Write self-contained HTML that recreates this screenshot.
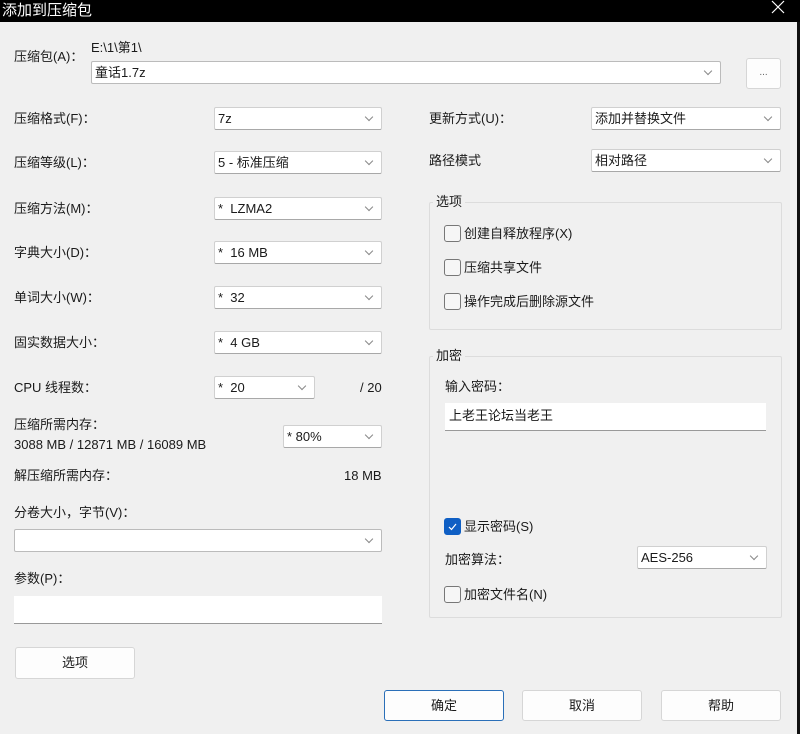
<!DOCTYPE html>
<html><head><meta charset="utf-8"><style>
*{box-sizing:border-box;margin:0;padding:0}
body{width:800px;height:734px;background:#f0f0f0;position:relative;overflow:hidden;font-family:"Liberation Sans","Noto Sans CJK SC",sans-serif;font-size:13px;color:#1a1a1a}
.a{position:absolute;white-space:nowrap;line-height:16px}
.c{position:absolute;background:#fff;border:1px solid #d0d0d0;border-bottom-color:#a8a8a8;border-radius:2px;height:23px;padding:3px 3px;line-height:16px}
.c:after{content:"";position:absolute;right:9px;top:6px;width:5px;height:5px;border-right:1px solid #888;border-bottom:1px solid #888;transform:rotate(45deg)}
.i{position:absolute;background:#fff;border-bottom:1px solid #999;padding:4px 4px}
.b{position:absolute;background:#fdfdfd;border:1px solid #d6d6d6;border-radius:3px;text-align:center;line-height:30px}
.g{position:absolute;border:1px solid #dcdcdc;border-radius:2px}
.gl{position:absolute;background:#f0f0f0;padding:0 3px;line-height:16px}
.k{position:absolute;width:17px;height:17px;border:1px solid #777;border-radius:3px;background:#f6f6f6}
</style></head><body>
<div style="position:absolute;left:0;top:0;width:800px;height:22px;background:#000"></div>
<div class="a" style="left:2px;top:1px;color:#fff;font-size:15px;line-height:19px">添加到压缩包</div>
<svg style="position:absolute;left:770px;top:-1px" width="16" height="16"><path d="M2 2L14 14M14 2L2 14" stroke="#fff" stroke-width="1.2"/></svg>
<div style="position:absolute;left:797px;top:22px;width:3px;height:712px;background:#111"></div>

<div class="a" style="left:14px;top:49px">压缩包(A)：</div>
<div class="a" style="left:91px;top:40px">E:\1\第1\</div>
<div class="c" style="left:91px;top:61px;width:630px;border-color:#bbb">童话1.7z</div>
<div class="b" style="left:746px;top:58px;width:35px;height:31px;line-height:28px;font-size:10px;color:#666">...</div>

<div class="a" style="left:14px;top:111px">压缩格式(F)：</div>
<div class="c" style="left:214px;top:107px;width:168px">7z</div>
<div class="a" style="left:14px;top:155px">压缩等级(L)：</div>
<div class="c" style="left:214px;top:151px;width:168px">5 - 标准压缩</div>
<div class="a" style="left:14px;top:201px">压缩方法(M)：</div>
<div class="c" style="left:214px;top:197px;width:168px">*&nbsp; LZMA2</div>
<div class="a" style="left:14px;top:245px">字典大小(D)：</div>
<div class="c" style="left:214px;top:241px;width:168px">*&nbsp; 16 MB</div>
<div class="a" style="left:14px;top:290px">单词大小(W)：</div>
<div class="c" style="left:214px;top:286px;width:168px">*&nbsp; 32</div>
<div class="a" style="left:14px;top:335px">固实数据大小：</div>
<div class="c" style="left:214px;top:331px;width:168px">*&nbsp; 4 GB</div>
<div class="a" style="left:14px;top:380px">CPU 线程数：</div>
<div class="c" style="left:214px;top:376px;width:101px">*&nbsp; 20</div>
<div class="a" style="left:360px;top:380px">/ 20</div>
<div class="a" style="left:14px;top:417px">压缩所需内存：</div>
<div class="a" style="left:14px;top:437px">3088 MB / 12871 MB / 16089 MB</div>
<div class="c" style="left:283px;top:425px;width:99px">* 80%</div>
<div class="a" style="left:14px;top:468px">解压缩所需内存：</div>
<div class="a" style="left:344px;top:468px">18 MB</div>
<div class="a" style="left:14px;top:505px">分卷大小，字节(V)：</div>
<div class="c" style="left:14px;top:529px;width:368px;border-color:#bbb"></div>
<div class="a" style="left:14px;top:571px">参数(P)：</div>
<div class="i" style="left:14px;top:596px;width:368px;height:28px"></div>
<div class="b" style="left:15px;top:647px;width:120px;height:32px">选项</div>

<div class="a" style="left:429px;top:111px">更新方式(U)：</div>
<div class="c" style="left:591px;top:107px;width:190px">添加并替换文件</div>
<div class="a" style="left:429px;top:153px">路径模式</div>
<div class="c" style="left:591px;top:149px;width:190px">相对路径</div>

<div class="g" style="left:429px;top:202px;width:353px;height:128px"></div>
<div class="gl" style="left:433px;top:194px">选项</div>
<div class="k" style="left:444px;top:225px"></div><div class="a" style="left:464px;top:226px">创建自释放程序(X)</div>
<div class="k" style="left:444px;top:259px"></div><div class="a" style="left:464px;top:260px">压缩共享文件</div>
<div class="k" style="left:444px;top:293px"></div><div class="a" style="left:464px;top:294px">操作完成后删除源文件</div>

<div class="g" style="left:429px;top:356px;width:353px;height:262px"></div>
<div class="gl" style="left:433px;top:348px">加密</div>
<div class="a" style="left:445px;top:379px">输入密码：</div>
<div class="i" style="left:445px;top:403px;width:321px;height:28px;padding:2px 4px">上老王论坛当老王</div>
<div class="k" style="left:444px;top:518px;background:#0f5fc4;border-color:#0f5fc4"><svg width="15" height="15" style="position:absolute;left:0;top:0"><path d="M4 8L6.5 10.5L11 5" stroke="#fff" stroke-width="1.2" fill="none"/></svg></div>
<div class="a" style="left:464px;top:519px">显示密码(S)</div>
<div class="a" style="left:445px;top:552px">加密算法：</div>
<div class="c" style="left:637px;top:546px;width:130px">AES-256</div>
<div class="k" style="left:444px;top:586px"></div><div class="a" style="left:464px;top:587px">加密文件名(N)</div>

<div class="b" style="left:384px;top:690px;width:120px;height:31px;border-color:#2a6fb8">确定</div>
<div class="b" style="left:522px;top:690px;width:120px;height:31px">取消</div>
<div class="b" style="left:661px;top:690px;width:120px;height:31px">帮助</div>
</body></html>
